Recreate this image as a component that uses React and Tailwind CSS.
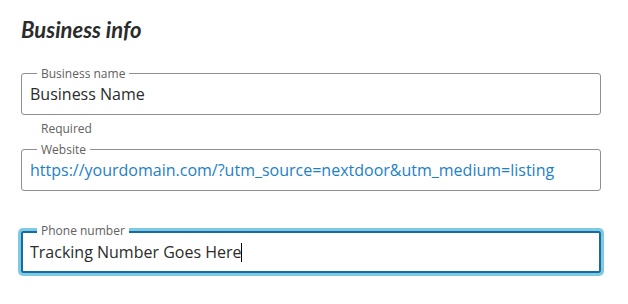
const bodyFont = { fontFamily: '"Open Sans", "Noto Sans", sans-serif' };

function Field({ label, value, focused, link }) {
  return (
    <div className="relative">
      <div
        className={
          focused
            ? "border-2 border-[#1769a8] rounded-[2px] pl-[7px] pr-[7px] py-[8px] shadow-[0_0_0_3px_#7ecadf]"
            : "border border-[#8f8f8f] rounded-[3px] pl-[8px] pr-[8px] py-[9px]"
        }
      >
        <div
          className={
            "text-[16px] leading-[22px] whitespace-nowrap overflow-hidden " +
            (link ? "text-[#1e80c6]" : "text-[#2b2b2b]")
          }
        >
          {value}
          {focused && <span className="inline-block w-px h-[19px] bg-black align-[-4px]" />}
        </div>
      </div>
      <span
        className={
          "absolute left-[16px] bg-white px-[4px] text-[12px] leading-[14px] text-[#616161] " +
          (focused ? "top-[-8px] py-[1px]" : "top-[-6px]")
        }
      >
        {label}
      </span>
    </div>
  );
}

export default function App() {
  return (
    <div className="w-[628px] h-[304px] bg-white pl-[21px] pr-[27px] pt-[16px]" style={bodyFont}>
      <h2
        className="text-[22px] leading-[28px] font-bold italic text-[#2b2b2b] mb-[29px]"
        style={{ fontFamily: 'Lato, sans-serif' }}
      >
        Business info
      </h2>

      <Field label="Business name" value="Business Name" />
      <p className="pl-[20px] text-[12px] leading-[16px] mt-[6px] mb-[12px] text-[#616161]">Required</p>

      <Field label="Website" value="https://yourdomain.com/?utm_source=nextdoor&utm_medium=listing" link />

      <div className="h-[40px]" />
      <Field label="Phone number" value="Tracking Number Goes Here" focused />
    </div>
  );
}
